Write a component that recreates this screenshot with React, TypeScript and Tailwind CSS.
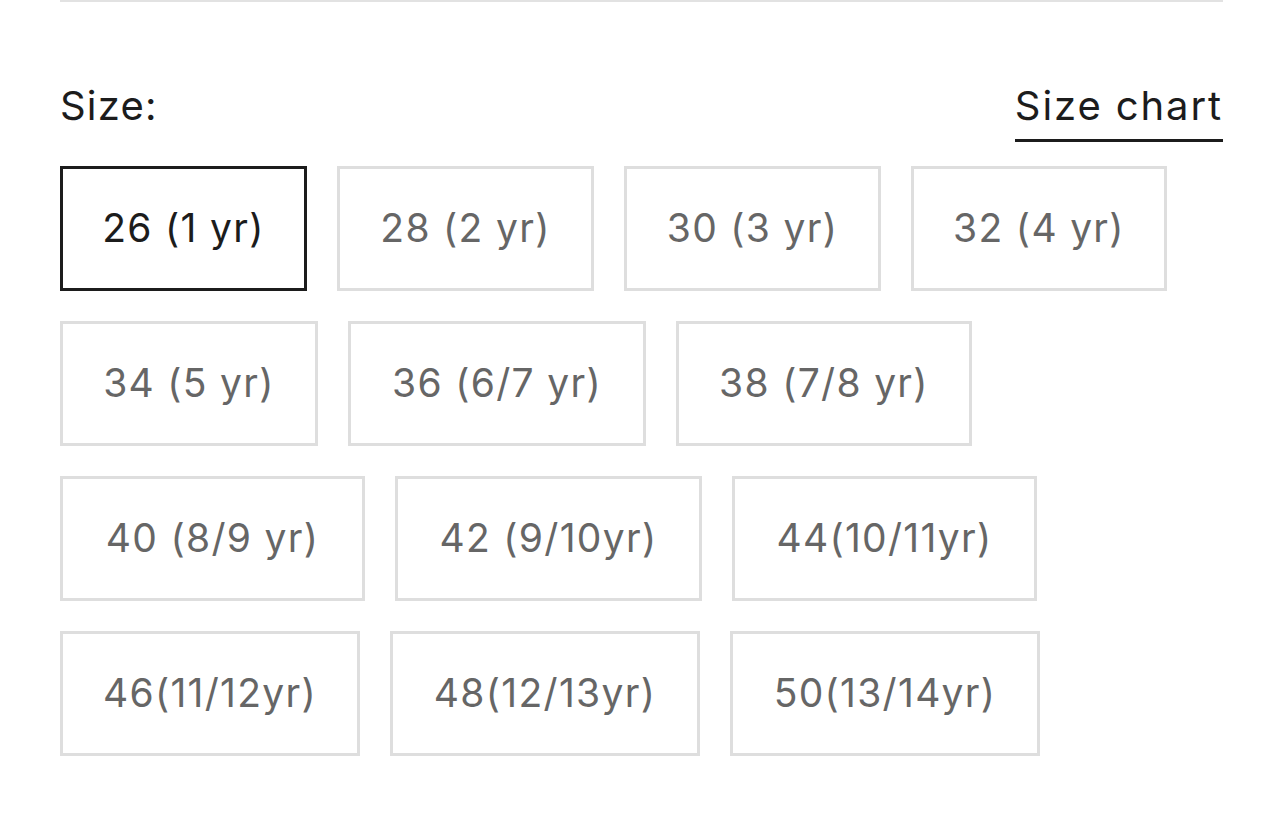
const sizes = [
  { label: "26 (1 yr)", w: "w-[247px]" },
  { label: "28 (2 yr)", w: "w-[257px]" },
  { label: "30 (3 yr)", w: "w-[257px]" },
  { label: "32 (4 yr)", w: "w-[256px]" },
  { label: "34 (5 yr)", w: "w-[258px]" },
  { label: "36 (6/7 yr)", w: "w-[298px]" },
  { label: "38 (7/8 yr)", w: "w-[296px]" },
  { label: "40 (8/9 yr)", w: "w-[305px]" },
  { label: "42 (9/10yr)", w: "w-[307px]" },
  { label: "44(10/11yr)", w: "w-[305px]" },
  { label: "46(11/12yr)", w: "w-[300px]" },
  { label: "48(12/13yr)", w: "w-[310px]" },
  { label: "50(13/14yr)", w: "w-[310px]" },
]

export default function App() {
  const selected = 0

  return (
    <div className="min-h-[819px] bg-white pl-[60px] pr-[61px] font-['Inter','Open_Sans',sans-serif]">
      <div className="border-t-2 border-[#e2e2e2]">
        <div className="flex items-end justify-between pt-[80px]">
          <span className="text-[40px] leading-[48px] text-[#1c1c1c] tracking-[1.2px] pb-[12px]">Size:</span>
          <a className="text-[40px] leading-[48px] text-[#1c1c1c] tracking-[1.9px] pb-[9px] border-b-[3px] border-[#1c1c1c]">
            Size chart
          </a>
        </div>

        <div className="flex flex-wrap gap-x-[30px] gap-y-[30px] mt-[24px]">
          {sizes.map((s, i) => (
            <button
              key={s.label}
              className={
                i === selected
                  ? `${s.w} h-[125px] flex items-center justify-center border-[3px] border-[#1c1c1c] text-[39px] text-[#1c1c1c] tracking-[1.3px]`
                  : `${s.w} h-[125px] flex items-center justify-center border-[3px] border-[#dedede] text-[39px] text-[#666666] tracking-[1.3px]`
              }
            >
              {s.label}
            </button>
          ))}
        </div>
      </div>
    </div>
  )
}
